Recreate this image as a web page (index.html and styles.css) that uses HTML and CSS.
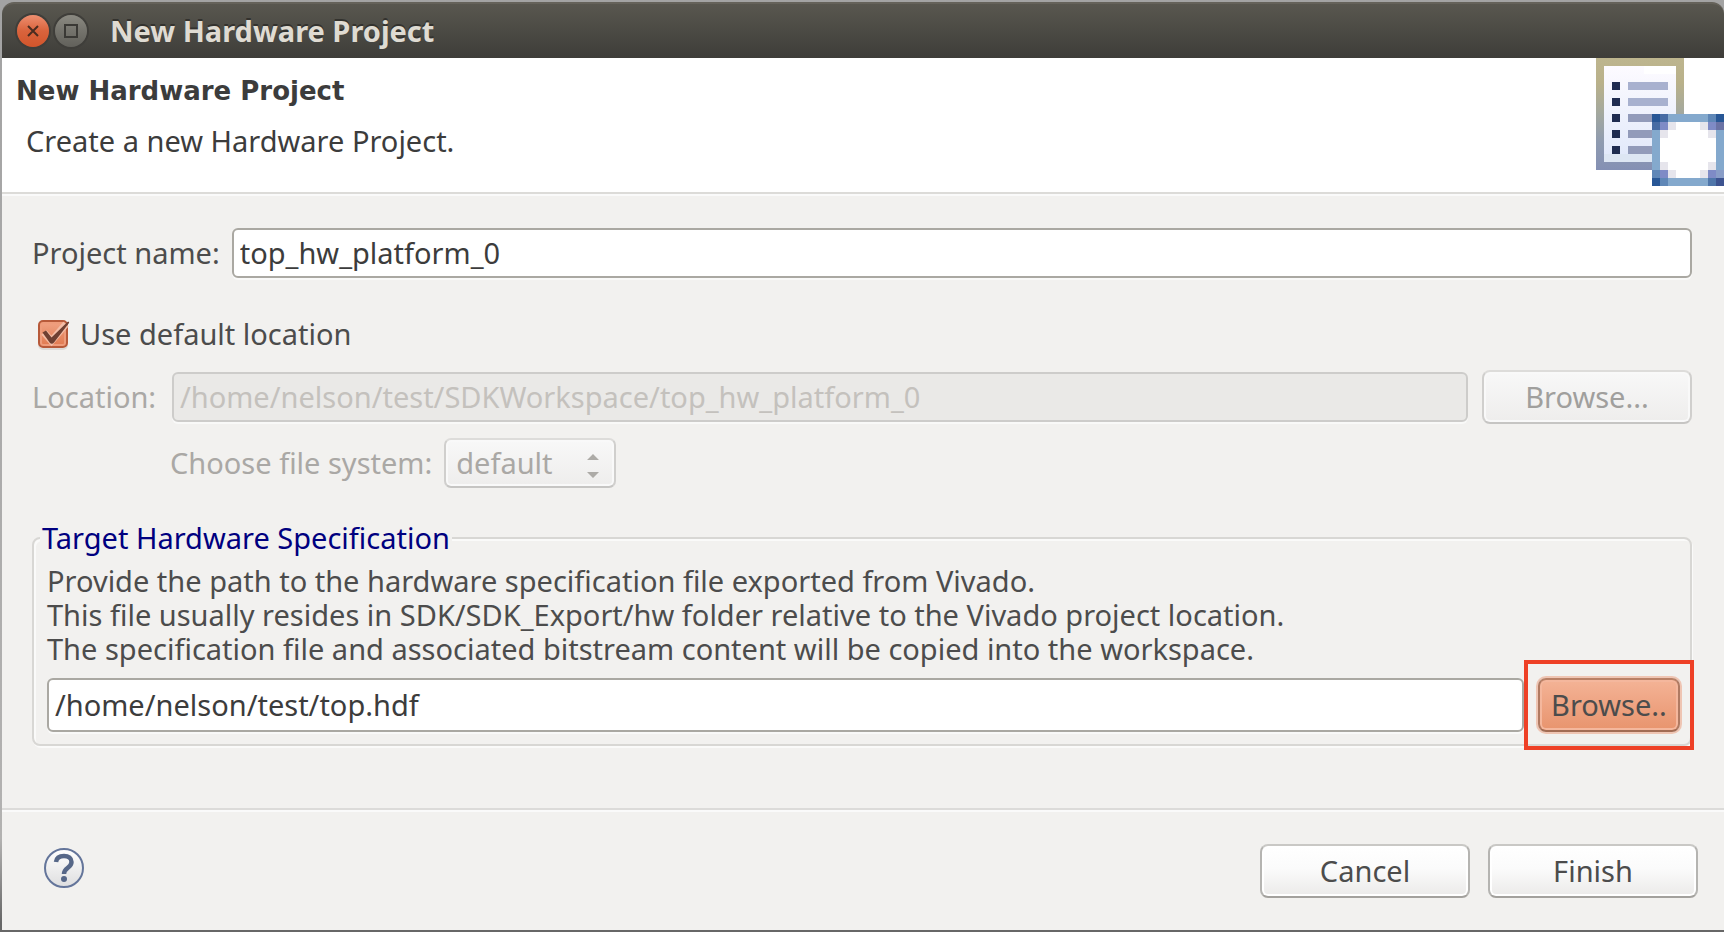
FILE: index.html
```html
<!DOCTYPE html>
<html lang="en">
<head>
<meta charset="utf-8">
<title>New Hardware Project</title>
<link rel="stylesheet" href="styles.css">
</head>
<body>
<main class="window">
  <div class="titlebar">
    <button class="win-btn win-close" type="button" aria-label="Close">
      <svg viewBox="0 0 32 32" width="32" height="32"><path d="M11 11l10 10M21 11l-10 10" fill="none" stroke="#4a2c20" stroke-width="2"/></svg>
    </button>
    <button class="win-btn win-max" type="button" aria-label="Maximize">
      <svg viewBox="0 0 32 32" width="32" height="32"><path d="M10 10h12v12H10z" fill="none" stroke="#3a3935" stroke-width="2"/></svg>
    </button>
    <span class="titlebar-text">New Hardware Project</span>
  </div>

  <header class="banner">
    <div class="banner-text">
      <h1 class="banner-title">New Hardware Project</h1>
      <p class="banner-desc">Create a new Hardware Project.</p>
    </div>
    <svg class="banner-icon" viewBox="0 0 16 16" width="128" height="128" shape-rendering="crispEdges" aria-hidden="true">
      <defs>
        <linearGradient id="frame" x1="0" y1="0" x2="0" y2="1">
          <stop offset="0" stop-color="#bdb58e"/><stop offset=".22" stop-color="#b9b18a"/>
          <stop offset=".5" stop-color="#a3a89f"/><stop offset=".75" stop-color="#8f9bb0"/>
          <stop offset="1" stop-color="#8490b4"/>
        </linearGradient>
        <linearGradient id="sheet" x1="0" y1="0" x2="0" y2="1">
          <stop offset="0" stop-color="#fdfbff"/><stop offset="1" stop-color="#e0e8fa"/>
        </linearGradient>
      </defs>
      <path fill="url(#frame)" d="M0 0h11v14H0z"/>
      <path fill="url(#sheet)" d="M1 1h9v12H1z"/>
      <path fill="#fff" d="M6 1h4v1H6z"/>
      <path fill="#dde6f3" d="M1 12h9v1H1z"/>
      <path fill="#1f2c50" d="M2 3h1v1H2zM2 5h1v1H2zM2 7h1v1H2zM2 9h1v1H2zM2 11h1v1H2z"/>
      <path fill="#a8b1cf" d="M4 3h5v1H4zM4 5h5v1H4z"/>
      <path fill="#929bba" d="M4 7h5v1H4zM4 9h5v1H4zM4 11h5v1H4z"/>
      <path fill="#84a9cd" d="M7 7h9v9H7z"/>
      <path fill="#fff" d="M8 8h7v7H8z"/>
      <path fill="#285796" d="M7 7h1v1H7zM15 7h1v1h-1zM7 15h1v1H7z"/>
      <path fill="#3d5390" d="M15 15h1v1h-1z"/>
      <path fill="#476ca4" d="M8 7h1v1H8zM7 8h1v1H7z"/>
      <path fill="#5f87b7" d="M14 7h1v1h-1zM7 14h1v1H7zM8 15h1v1H8z"/>
      <path fill="#4f76aa" d="M14 15h1v1h-1z"/>
      <path fill="#6b73a5" d="M15 8h1v1h-1z"/>
      <path fill="#899dc7" d="M15 14h1v1h-1z"/>
      <path fill="#7f8bc6" d="M8 8h1v1H8zM14 8h1v1h-1zM8 14h1v1H8zM14 14h1v1h-1z"/>
      <path fill="#e6e5ec" d="M9 8h1v1H9zM8 9h1v1H8zM13 8h1v1h-1zM14 9h1v1h-1zM8 13h1v1H8zM9 14h1v1H9zM14 13h1v1h-1zM13 14h1v1h-1z"/>
    </svg>
  </header>

  <form class="form" onsubmit="return false">
    <div class="content">
      <div class="row row-name">
        <label for="project-name">Project name:</label>
        <input class="field" id="project-name" type="text" value="top_hw_platform_0">
      </div>

      <div class="row row-check">
        <span class="check">
          <input class="check-input" id="use-default" type="checkbox" checked>
          <svg class="check-mark" viewBox="0 0 32 32" width="32" height="32" aria-hidden="true"><path d="M5 12.500l7.500 8.500L27 4" fill="none" stroke="#f3bda6" stroke-width="7"/><path d="M3.500 12.500l3.500-2 5.500 7L28.500 2c1-.8 2-.2 1.500 1L15 22.500c-1.200 1.600-3 1.600-4.200.2z" fill="#6e4032"/></svg>
        </span>
        <label for="use-default">Use default location</label>
      </div>

      <div class="row row-location">
        <label class="muted location-label" for="location">Location:</label>
        <input class="field" id="location" type="text" value="/home/nelson/test/SDKWorkspace/top_hw_platform_0" disabled>
        <button class="btn" type="button" disabled>Browse...</button>
      </div>

      <div class="row row-system">
        <label class="muted" for="file-system">Choose file system:</label>
        <span class="picker">
          <select class="picker-select" id="file-system" disabled><option>default</option></select>
          <svg class="picker-arrows" viewBox="0 0 12 24" width="12" height="24" aria-hidden="true"><path d="M0 6l6-6 6 6zM0 18l6 6 6-6z" fill="#adaba7"/></svg>
        </span>
      </div>

      <fieldset class="group">
        <legend class="group-title">Target Hardware Specification</legend>
        <p class="group-text">Provide the path to the hardware specification file exported from Vivado.<br>This file usually resides in SDK/SDK_Export/hw folder relative to the Vivado project location.<br>The specification file and associated bitstream content will be copied into the workspace.</p>
        <div class="row row-spec">
          <input class="field field-tall" type="text" aria-label="Hardware specification file" value="/home/nelson/test/top.hdf">
          <span class="marked"><button class="btn btn-accent" type="button">Browse..</button></span>
        </div>
      </fieldset>
    </div>

    <footer class="footer">
      <button class="help" type="button" aria-label="Help">
        <svg viewBox="0 0 40 40" width="40" height="40">
          <defs><linearGradient id="disc" x1="0" y1="0" x2="0" y2="1"><stop offset="0" stop-color="#fff"/><stop offset="1" stop-color="#dededf"/></linearGradient></defs>
          <circle cx="20" cy="20" r="19" fill="url(#disc)" stroke="#64759a" stroke-width="2"/>
          <path d="M12 14c.5-4 3.500-6 8-6 4.500 0 7.500 2.200 7.500 6 0 6-7.500 5.500-7.500 12" fill="none" stroke="#566788" stroke-width="4.500"/>
          <circle cx="20" cy="31" r="3" fill="#566788"/>
        </svg>
      </button>
      <div class="actions">
        <button class="btn" type="button">Cancel</button>
        <button class="btn" type="submit">Finish</button>
      </div>
    </footer>
  </form>
</main>
</body>
</html>
```

FILE: styles.css
```css
* {
  box-sizing: border-box;
}

body {
  margin: 0;
  background: linear-gradient(#a3a3a3, #b3b2b1 90%, #676767 99%);
  color: #4c4c4c;
  font-family: "Noto Sans", "Open Sans", sans-serif;
  font-size: 29px;
  line-height: 34px;
}

button,
input,
select {
  margin: 0;
  color: inherit;
  font: inherit;
}

h1,
p {
  margin: 0;
}

.window {
  display: flex;
  flex-direction: column;
  min-height: 100vh;
  padding: 2px 0 2px 2px;
}

.titlebar {
  display: flex;
  align-items: center;
  gap: 6px;
  height: 56px;
  padding-left: 15px;
  border-top: 2px solid #65625a;
  border-radius: 12px 12px 0 0;
  background: linear-gradient(#59574f, #3e3d39);
  color: #dfdbd2;
  font-weight: bold;
}

.titlebar-text {
  margin-left: 17px;
  text-shadow: 0 -2px 0 #33322e;
}

.win-btn {
  display: block;
  width: 32px;
  height: 32px;
  padding: 0;
  border: 0;
  border-radius: 50%;
  box-shadow: 0 0 0 2px #3f3e3a;
}

.win-btn svg {
  display: block;
}

.win-close {
  background: linear-gradient(#ee8f70, #d9633c 50%, #d2552b);
}

.win-max {
  background: linear-gradient(#8b8a82, #74736c 50%, #62615b);
}

.banner {
  display: flex;
  justify-content: space-between;
  border-bottom: 2px solid #dcdbd8;
  background: #fff;
  color: #3c3c3c;
}

.banner-text {
  padding: 16px 0 34px 14px;
}

.banner-title {
  font-family: "DejaVu Sans", sans-serif;
  font-size: 26px;
  line-height: 34px;
}

.banner-desc {
  padding: 16px 0 0 10px;
}

.banner-icon {
  display: block;
  flex: none;
}

.form {
  display: flex;
  flex: 1;
  flex-direction: column;
  border-top: 2px solid #fafafa;
  background: #f2f1ef;
}

.content {
  flex: 1;
  padding: 32px 32px 16px 30px;
}

.row {
  display: flex;
  align-items: center;
}

.row-name {
  gap: 12px;
}

.row-check {
  gap: 12px;
  margin-top: 38px;
  padding-left: 6px;
}

.row-location {
  gap: 14px;
  margin-top: 18px;
}

.row-system {
  gap: 12px;
  margin-top: 14px;
  padding-left: 138px;
}

.muted {
  color: #aaa8a5;
}

.location-label {
  min-width: 126px;
}

.field {
  flex: 1;
  min-width: 0;
  height: 50px;
  padding: 0 6px 2px;
  border: 2px solid #aaa8a2;
  border-radius: 6px;
  background: #fff;
  box-shadow: 0 2px 0 #f9f9f8;
  color: #3c3c3c;
}

.field:disabled {
  border-color: #cdccca;
  background: #eae9e7;
  color: #c4c1bd;
}

.field-tall {
  height: 54px;
}

.check {
  position: relative;
  width: 30px;
  height: 36px;
  padding: 4px 0;
}

.check-input {
  display: block;
  width: 30px;
  height: 28px;
  margin: 0;
  appearance: none;
  border: 2px solid #b75a3a;
  border-radius: 5px;
  background: linear-gradient(#f0a283, #e07a50);
  box-shadow: inset 0 0 0 2px #ee9c7b, 0 2px 0 #dddbd8;
}

.check-mark {
  position: absolute;
  top: 4px;
  left: 1px;
  pointer-events: none;
}

.btn {
  width: 210px;
  height: 54px;
  padding: 0;
  border: 2px solid;
  border-color: #c9c8c5 #b5b4b1 #a3a19d;
  border-radius: 8px;
  background: linear-gradient(#fff, #fbfbfb 45%, #ebeae9);
  box-shadow: inset 0 0 0 2px #fff;
}

.btn:disabled {
  border-color: #dddcda #d0cfcd #c6c5c3;
  background: linear-gradient(#f8f8f8, #eeedec);
  box-shadow: inset 0 0 0 2px #f9f9f9;
  color: #a09f9d;
}

.picker {
  position: relative;
}

.picker-select {
  display: block;
  width: 172px;
  height: 50px;
  padding: 0 40px 0 10px;
  appearance: none;
  border: 2px solid;
  border-color: #dddcda #d0cfcd #c6c5c3;
  border-radius: 7px;
  background: linear-gradient(#f8f8f8, #eeedec);
  box-shadow: inset 0 0 0 2px #f9f9f9;
  color: #aaa8a5;
  opacity: 1;
}

.picker-arrows {
  position: absolute;
  top: 16px;
  right: 17px;
  pointer-events: none;
}

.group {
  min-width: 0;
  margin: 33px 0 0;
  padding: 9px 10px 12px 13px;
  border: 2px solid #d8d7d4;
  border-radius: 8px;
  box-shadow: inset 2px 2px 0 #fafaf9, 1px 2px 0 #fafaf9;
}

.group-title {
  margin-left: -7px;
  padding: 0 2px;
  background: #f2f1ef;
  color: #00007f;
}

.group-text {
  margin-bottom: 12px;
}

.row-spec {
  gap: 14px;
}

.marked {
  position: relative;
}

.marked::after {
  content: "";
  position: absolute;
  inset: -18px -14px;
  border: 4px solid #ee4026;
  pointer-events: none;
}

.btn-accent {
  display: block;
  width: 142px;
  border-color: #b98066 #b07a62 #a26c54;
  background: linear-gradient(#f4b396, #e8946e);
  box-shadow: inset 0 0 0 2px #f4b79d, 0 0 0 2px #efc5b3;
}

.footer {
  display: flex;
  align-items: flex-start;
  justify-content: space-between;
  padding: 34px 26px 32px 42px;
  border-top: 2px solid #dcdbd9;
  box-shadow: inset 0 2px 0 #fafafa;
}

.help {
  margin-top: 4px;
  padding: 0;
  border: 0;
  background: none;
}

.help svg {
  display: block;
}

.actions {
  display: flex;
  gap: 18px;
}
```
